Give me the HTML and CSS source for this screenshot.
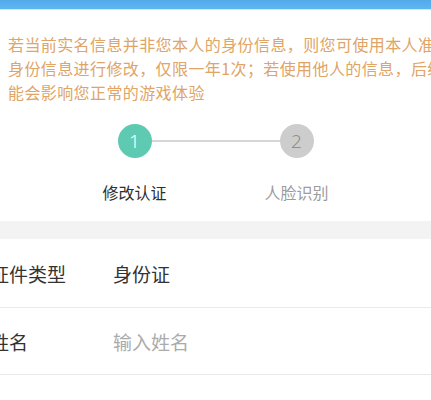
FILE: index.html
```html
<html lang="zh-CN">
  <head>
    <meta charset="UTF-8" />
    <meta name="viewport" content="width=device-width, initial-scale=1.0" />
    <link rel="stylesheet" href="styles.css">
    <title>实名认证修改</title>
  </head>
  <body>
    <header class="topbar"></header>

    <main>
      <div class="notice">
        <p>若当前实名信息并非您本人的身份信息，则您可使用本人准</p>
        <p>身份信息进行修改，仅限一年1次；若使用他人的信息，后续</p>
        <p>能会影响您正常的游戏体验</p>
      </div>

      <div class="steps">
        <div class="step-track">
          <span class="step-dot active">1</span>
          <span class="step-line"></span>
          <span class="step-dot">2</span>
        </div>
        <div class="step-labels">
          <span class="step-label active">修改认证</span>
          <span class="step-label">人脸识别</span>
        </div>
      </div>

      <div class="divider"></div>

      <form class="form">
        <div class="form-row">
          <span class="form-label">证件类型</span>
          <span class="form-value">身份证</span>
        </div>
        <div class="form-row">
          <span class="form-label">姓名</span>
          <input class="form-input" type="text" placeholder="输入姓名" />
        </div>
        <div class="form-row">
          <span class="form-label">证件号码</span>
          <input class="form-input" type="text" placeholder="输入证件号码" />
        </div>
      </form>
    </main>
  </body>
</html>
```

FILE: styles.css
```css
*,
*::after,
*::before {
  margin: 0;
  padding: 0;
  box-sizing: border-box;
}

body {
  width: 431px;
  overflow: hidden;
  background-color: white;
  font-family: "Noto Sans CJK SC", "Noto Sans", sans-serif;
}

.topbar {
  height: 10px;
  background: linear-gradient(#54a9ea, #5db6f2);
  border-bottom: 1px solid #cfe7fa;
}

/* notice */
.notice {
  padding: 22px 0 0 8px;
  color: #e0a466;
  font-size: 16px;
  letter-spacing: 0.4px;
  line-height: 24px;
  white-space: nowrap;
}

/* steps */
.steps {
  margin-top: 20px;
}
.step-track {
  display: flex;
  justify-content: center;
  align-items: center;
}
.step-dot {
  width: 34px;
  height: 34px;
  border-radius: 50%;
  display: flex;
  justify-content: center;
  align-items: center;
  background-color: #cdcdcd;
  color: #8f8f8f;
  font-family: "Noto Sans", sans-serif;
  font-weight: 300;
  font-size: 19px;
}
.step-dot.active {
  background-color: #5ecab2;
  color: white;
}
.step-line {
  width: 128px;
  height: 2px;
  background-color: #d6d6d6;
}
.step-labels {
  display: flex;
  justify-content: center;
  gap: 62px;
  margin-top: 23px;
}
.step-label {
  width: 100px;
  text-align: center;
  font-size: 16px;
  line-height: 22px;
  color: #9c9c9c;
}
.step-label.active {
  color: #2e2e2e;
}

.divider {
  height: 18px;
  margin-top: 18px;
  background-color: #f3f3f3;
}

/* form */
.form-row {
  display: flex;
  align-items: center;
  height: 69px;
  margin-left: -10px;
  border-bottom: 1px solid #e9e9e9;
  font-size: 19px;
}
.form-row + .form-row {
  height: 67px;
}
.form-label {
  width: 123px;
  color: #333333;
}
.form-value {
  color: #333333;
}
.form-input {
  border: none;
  outline: none;
  background: none;
  font-family: inherit;
  font-size: 19px;
  color: #333333;
}
.form-input::placeholder {
  color: #ababab;
}
```
